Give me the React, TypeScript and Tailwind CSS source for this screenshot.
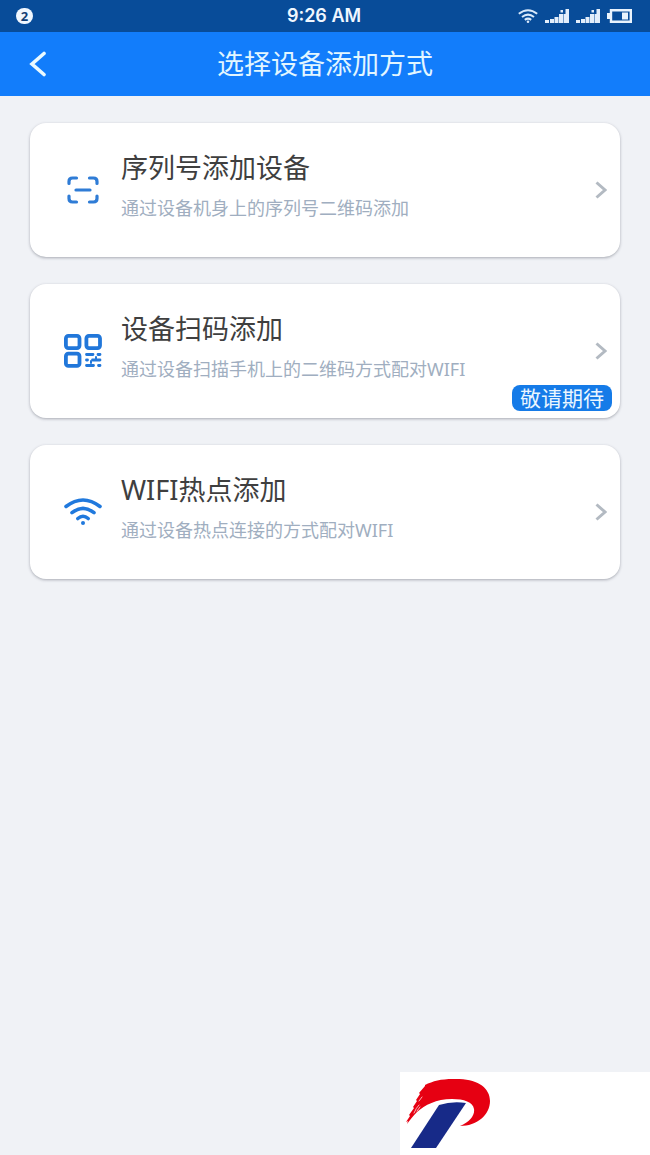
import type { ReactNode } from 'react'

type AddMethod = {
  title: string
  description: string
  icon: ReactNode
  badge?: string
}

function ScanIcon() {
  return (
    <svg viewBox="0 0 32 30" className="h-[30px] w-8" fill="none" stroke="#2f7cd6" strokeWidth="3.200" strokeLinecap="round">
      <path d="M2 8.500V6.500Q2 3 5.500 3H9.500M22.500 3H26.500Q30 3 30 6.500V8.500M30 21V23.500Q30 27 26.500 27H22.500M9.500 27H5.500Q2 27 2 23.500V21" />
      <path d="M9 15H23" />
    </svg>
  )
}

function QrIcon() {
  return (
    <svg viewBox="0 0 38 34" className="h-[34px] w-[38px]" fill="none" stroke="#2177da">
      <g strokeWidth="3.800">
        <rect x="1.900" y="1.900" width="13.600" height="12.200" rx="2.500" />
        <rect x="22.400" y="1.900" width="13.600" height="12.200" rx="2.500" />
        <rect x="1.900" y="19.700" width="13.600" height="12.200" rx="2.500" />
      </g>
      <g strokeWidth="2.800" strokeLinecap="round">
        <path d="M22.500 20.500H29M34 20.500H36M22.500 26H23.500M28.500 26H36M22.500 31.500H29.500M34.500 31.500H36" />
        <path d="M32 23V25M27 27V29" strokeWidth="2" />
      </g>
    </svg>
  )
}

function WifiIcon() {
  return (
    <svg viewBox="0 0 38 28" className="h-7 w-[38px]" fill="none" stroke="#2079dd" strokeWidth="3.600" strokeLinecap="round">
      <path d="M2 8.500Q19 -4.500 36 8.500" />
      <path d="M8 14.700Q19 6 30 14.700" />
      <path d="M13.800 20.500Q19 16 24.200 20.500" />
      <circle cx="19" cy="25" r="2" fill="#2079dd" stroke="none" />
    </svg>
  )
}

function Chevron() {
  return (
    <svg viewBox="0 0 12 18" className="h-[18px] w-3 shrink-0" fill="none" stroke="#b3bac2" strokeWidth="3">
      <path d="M1.500 1.500L10 9L1.500 16.500" />
    </svg>
  )
}

function Signal() {
  return (
    <svg viewBox="0 0 24 14" className="h-[14px] w-6" fill="#e3eefb">
      <path d="M0 11H4V14H0ZM5 10H9V14H5ZM9.500 8H13.500V14H9.500ZM14 5H18V14H14ZM15.500 1H18V3.500H15.500Z" />
      <path d="M20.500 0H24V14H18.500V5H20.500Z" />
    </svg>
  )
}

function StatusBar() {
  return (
    <div className="grid h-8 grid-cols-3 items-center bg-[#084c99] pr-[18px] pl-4 text-[#f0f7ff]">
      <span className="flex h-4 w-[17px] items-center justify-center rounded-full bg-[#f0f7ff] text-[13px] leading-4 font-bold text-[#123f76]">
        2
      </span>
      <span className="text-center font-[Inter,sans-serif] text-[18px] leading-6 font-semibold">9:26 AM</span>
      <span className="flex items-center justify-end gap-[7px]">
        <svg viewBox="0 0 20 14" className="h-[14px] w-5" fill="none" stroke="#d8e9fb" strokeWidth="2">
          <path d="M.8 4.800Q10 -2.400 19.200 4.800M4 8Q10 3.200 16 8M6.800 10.900Q10 8.400 13.200 10.900" />
          <circle cx="10" cy="12.700" r="1.300" fill="#d8e9fb" stroke="none" />
        </svg>
        <Signal />
        <Signal />
        <svg viewBox="0 0 25 14" className="h-[14px] w-[25px]">
          <path d="M4 1.200H23.800V12.800H4Z" fill="none" stroke="#e9f3fd" strokeWidth="2.400" />
          <path d="M0 4H5V10H0ZM15 3.500H21V10.500H15Z" fill="#e9f3fd" />
        </svg>
      </span>
    </div>
  )
}

function MethodCard({ title, description, icon, badge }: AddMethod) {
  return (
    <button
      type="button"
      className="relative flex w-full items-center rounded-2xl bg-white py-[27px] pr-[13px] pl-[33px] text-left shadow-[0_1px_3px_rgba(60,65,80,0.4)]"
    >
      <span className="flex w-10 shrink-0 justify-center">{icon}</span>
      <span className="ml-[18px] flex flex-1 flex-col gap-[10px] pb-[10px]">
        <span className="text-[27px] leading-9 text-[#3f3f3f]">{title}</span>
        <span className="text-[18px] leading-6 text-[#a0aec0]">{description}</span>
      </span>
      <Chevron />
      {badge && (
        <span className="absolute right-2 bottom-[7px] rounded-lg bg-[#157be8] px-2 text-[21px] leading-[26px] text-[#eaf6ff]">
          {badge}
        </span>
      )}
    </button>
  )
}

function BrandLogo() {
  return (
    <svg viewBox="0 0 86 70" className="h-[70px] w-[86px]" role="img" aria-label="Logo">
      <path
        fill="#e60012"
        d="M19 6C27 2 35 0 47 0C70 -1 84 8 84 22C84 36 71 47 54 47C64 43 69 36 68 30C67 23 58 20 46 20C30 20 19 26 11 33C7 37 4 41 1 45L2 42L0 43L4 37L3 36L8 29L7 28L11 22L10 21L14 15L13 14L19 7Z"
      />
      <path fill="none" stroke="#fff" strokeWidth="0.700" strokeLinecap="round" d="M8 34Q10 29 13 26M11 32L14 28M13 22L16 18" />
      <path fill="#172a88" d="M33 26Q46 22 60 24L30 69H5Z" />
    </svg>
  )
}

const methods: AddMethod[] = [
  { title: '序列号添加设备', description: '通过设备机身上的序列号二维码添加', icon: <ScanIcon /> },
  { title: '设备扫码添加', description: '通过设备扫描手机上的二维码方式配对WIFI', icon: <QrIcon />, badge: '敬请期待' },
  { title: 'WIFI热点添加', description: '通过设备热点连接的方式配对WIFI', icon: <WifiIcon /> },
]

export default function App() {
  return (
    <div className="flex min-h-screen flex-col bg-[#f0f2f6] font-['Noto_Sans','Noto_Sans_CJK_SC',sans-serif]">
      <StatusBar />
      <header className="grid h-16 grid-cols-[48px_1fr_48px] items-center bg-[#127dfb] px-[14px]">
        <button type="button" aria-label="返回" className="flex h-12 items-center justify-center">
          <svg viewBox="0 0 18 26" className="h-[26px] w-[18px]" fill="none" stroke="#eafaff" strokeWidth="3.600" strokeLinecap="round">
            <path d="M15 2.500L3 13L15 23.500" />
          </svg>
        </button>
        <h1 className="text-center text-[27px] leading-9 text-[#e2f6ff]">选择设备添加方式</h1>
      </header>
      <main className="flex flex-col gap-[27px] px-[30px] pt-[27px]">
        {methods.map((method) => (
          <MethodCard key={method.title} {...method} />
        ))}
      </main>
      <footer className="mt-auto w-[250px] self-end bg-white px-[6px] pt-[7px] pb-[6px]">
        <BrandLogo />
      </footer>
    </div>
  )
}
